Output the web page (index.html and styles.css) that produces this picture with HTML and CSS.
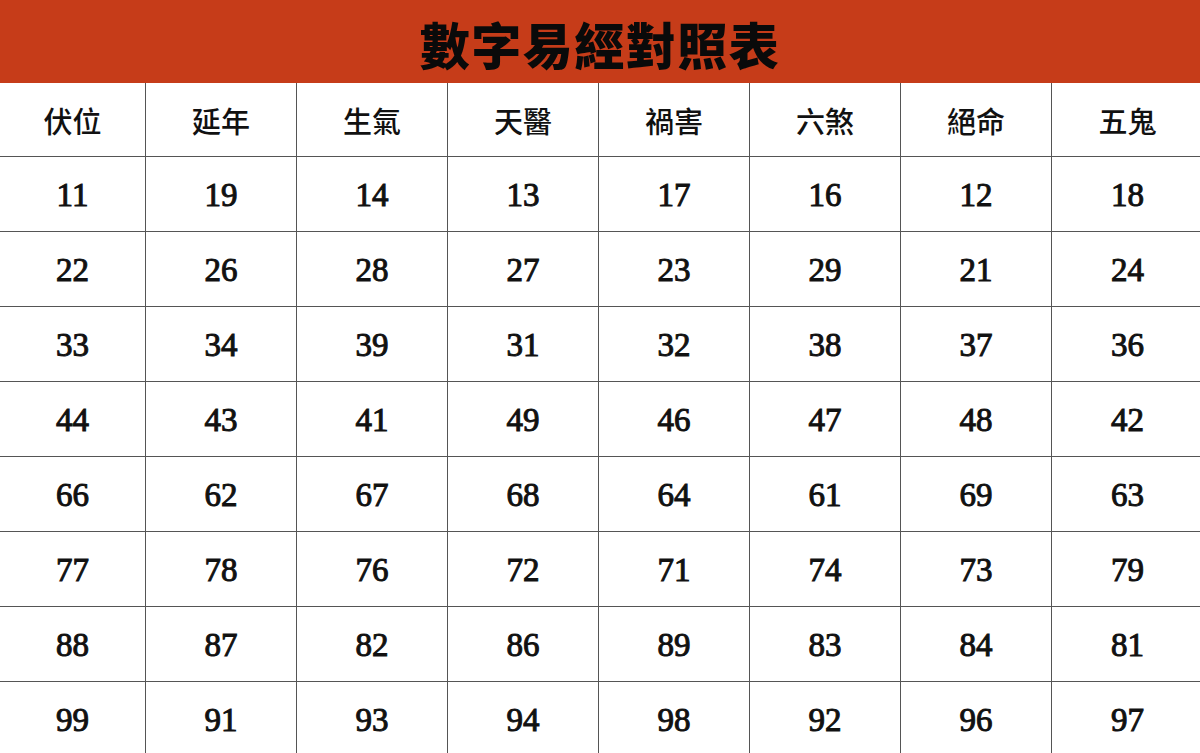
FILE: index.html
```html
<!DOCTYPE html>
<html lang="zh-Hant">
<head>
<meta charset="utf-8">
<title>數字易經對照表</title>
<link rel="stylesheet" href="styles.css">
</head>
<body>
<div class="page">
  <header class="banner"><h1 class="title">數字易經對照表</h1></header>
  <div class="table">
    <div class="cell head">伏位</div><div class="cell head">延年</div><div class="cell head">生氣</div><div class="cell head">天醫</div><div class="cell head">禍害</div><div class="cell head">六煞</div><div class="cell head">絕命</div><div class="cell head">五鬼</div>
    <div class="cell">11</div><div class="cell">19</div><div class="cell">14</div><div class="cell">13</div><div class="cell">17</div><div class="cell">16</div><div class="cell">12</div><div class="cell">18</div>
    <div class="cell">22</div><div class="cell">26</div><div class="cell">28</div><div class="cell">27</div><div class="cell">23</div><div class="cell">29</div><div class="cell">21</div><div class="cell">24</div>
    <div class="cell">33</div><div class="cell">34</div><div class="cell">39</div><div class="cell">31</div><div class="cell">32</div><div class="cell">38</div><div class="cell">37</div><div class="cell">36</div>
    <div class="cell">44</div><div class="cell">43</div><div class="cell">41</div><div class="cell">49</div><div class="cell">46</div><div class="cell">47</div><div class="cell">48</div><div class="cell">42</div>
    <div class="cell">66</div><div class="cell">62</div><div class="cell">67</div><div class="cell">68</div><div class="cell">64</div><div class="cell">61</div><div class="cell">69</div><div class="cell">63</div>
    <div class="cell">77</div><div class="cell">78</div><div class="cell">76</div><div class="cell">72</div><div class="cell">71</div><div class="cell">74</div><div class="cell">73</div><div class="cell">79</div>
    <div class="cell">88</div><div class="cell">87</div><div class="cell">82</div><div class="cell">86</div><div class="cell">89</div><div class="cell">83</div><div class="cell">84</div><div class="cell">81</div>
    <div class="cell">99</div><div class="cell">91</div><div class="cell">93</div><div class="cell">94</div><div class="cell">98</div><div class="cell">92</div><div class="cell">96</div><div class="cell">97</div>
  </div>
</div>
</body>
</html>
```
FILE: styles.css
```css
html, body {
  margin: 0;
  padding: 0;
  background: #ffffff;
}
.page {
  width: 1200px;
  height: 753px;
  overflow: hidden;
}
.banner {
  height: 83px;
  background: #c63c19;
  display: flex;
  align-items: center;
  justify-content: center;
}
.title {
  margin: 0;
  font-family: "Noto Sans CJK TC", "Noto Sans CJK SC", sans-serif;
  font-weight: 900;
  font-size: 50px;
  line-height: 1;
  color: #0a0a0a;
  letter-spacing: 1.5px;
  padding-top: 2px;
}
.table {
  display: grid;
  grid-template-columns: 146px repeat(7, 151px);
  grid-template-rows: 74px repeat(8, 75px);
  width: 1203px;
}
.cell {
  display: flex;
  align-items: center;
  justify-content: center;
  border-right: 1.5px solid #555;
  border-bottom: 1.5px solid #555;
  box-sizing: border-box;
  font-family: "Liberation Serif", "Times New Roman", serif;
  font-weight: 400;
  -webkit-text-stroke: 1px #111;
  font-size: 33px;
  color: #111;
  padding-top: 2px;
}
.cell.head {
  font-family: "Noto Sans CJK TC", "Noto Sans CJK SC", sans-serif;
  font-weight: 500;
  -webkit-text-stroke: 0;
  font-size: 29px;
  padding-top: 0;
}
.cell:nth-child(8n) {
  border-right: none;
}
```
